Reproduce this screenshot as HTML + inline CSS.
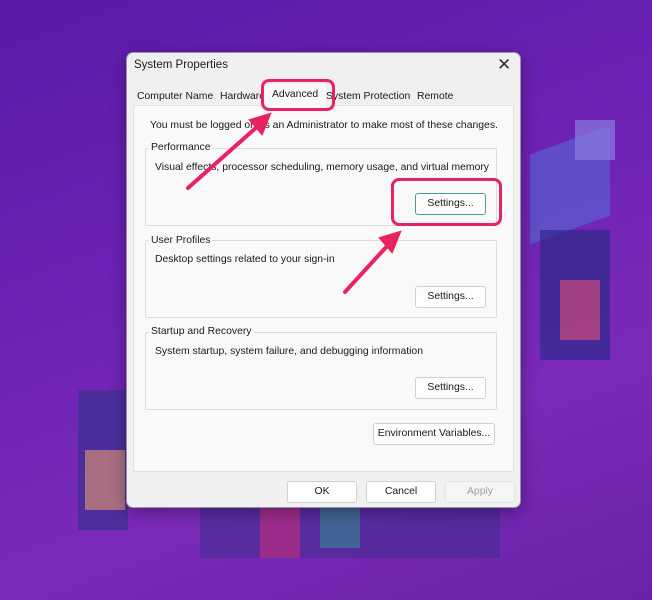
<!DOCTYPE html>
<html><head><style>
*{margin:0;padding:0;box-sizing:border-box}
body{width:652px;height:600px;overflow:hidden;position:relative;font-family:"Liberation Sans",sans-serif;font-size:10.4px;color:#1a1a1a;
background:linear-gradient(160deg,#5a1aa8 0%,#6d22b4 40%,#7a2ab8 70%,#6a22a8 100%)}
.a{position:absolute;white-space:nowrap}
.dlg{left:126px;top:52px;width:395px;height:456px;background:#f0f0f0;border:1px solid #9a8fb0;border-radius:7px;box-shadow:0 4px 16px rgba(0,0,0,.35)}
.panel{left:133px;top:105px;width:381px;height:367px;background:#f9f9f9;border:1px solid #e2e2e2}
.grp{border:1px solid #dcdcdc;border-radius:2px}
.lg{background:#f9f9f9;padding:0 2px}
.btn{background:#fdfdfd;border:1px solid #cfcfcf;border-radius:3px;text-align:center;line-height:20px;height:22px}
.tab{top:91px}
.hl{border:3.5px solid #e8235f;border-radius:8px}
</style></head><body>
<div class="a" style="left:530px;top:140px;width:80px;height:90px;background:#5a5fd0;transform:skewY(-20deg);opacity:.7"></div>
<div class="a" style="left:540px;top:230px;width:70px;height:130px;background:#2d2a8a;opacity:.7"></div>
<div class="a" style="left:560px;top:280px;width:40px;height:60px;background:#e2507a;opacity:.6"></div>
<div class="a" style="left:575px;top:120px;width:40px;height:40px;background:#8a7ae0;opacity:.7"></div>
<div class="a" style="left:78px;top:390px;width:50px;height:140px;background:#3a3090;opacity:.7"></div>
<div class="a" style="left:85px;top:450px;width:40px;height:60px;background:#d08a78;opacity:.7"></div>
<div class="a" style="left:200px;top:508px;width:300px;height:50px;background:#3a2d8a;opacity:.5"></div>
<div class="a" style="left:260px;top:508px;width:40px;height:50px;background:#e0307a;opacity:.5"></div>
<div class="a" style="left:320px;top:508px;width:40px;height:40px;background:#2a9a8a;opacity:.5"></div>

<div class="a dlg"></div>
<div class="a" style="left:134px;top:59px;font-size:11.5px">System Properties</div>
<div class="a" style="left:497px;top:55px;font-size:17px;color:#333">✕</div>
<div class="a panel"></div>
<div class="a tab" style="left:137px">Computer Name</div>
<div class="a tab" style="left:220px">Hardware</div>
<div class="a" style="left:264px;top:84px;width:62px;height:22px;background:#f9f9f9"></div>
<div class="a tab" style="left:272px;top:89px">Advanced</div>
<div class="a tab" style="left:326px">System Protection</div>
<div class="a tab" style="left:417px">Remote</div>

<div class="a" style="left:150px;top:120px">You must be logged on as an Administrator to make most of these changes.</div>

<div class="a grp" style="left:145px;top:148px;width:352px;height:78px"></div>
<div class="a lg" style="left:149px;top:142px">Performance</div>
<div class="a" style="left:155px;top:162px">Visual effects, processor scheduling, memory usage, and virtual memory</div>
<div class="a btn" style="left:415px;top:193px;width:71px;border-color:#4a9a9a">Settings...</div>

<div class="a grp" style="left:145px;top:240px;width:352px;height:78px"></div>
<div class="a lg" style="left:149px;top:235px">User Profiles</div>
<div class="a" style="left:155px;top:254px">Desktop settings related to your sign-in</div>
<div class="a btn" style="left:415px;top:286px;width:71px">Settings...</div>

<div class="a grp" style="left:145px;top:332px;width:352px;height:78px"></div>
<div class="a lg" style="left:149px;top:326px">Startup and Recovery</div>
<div class="a" style="left:155px;top:346px">System startup, system failure, and debugging information</div>
<div class="a btn" style="left:415px;top:377px;width:71px">Settings...</div>

<div class="a btn" style="left:373px;top:423px;width:122px">Environment Variables...</div>

<div class="a btn" style="left:287px;top:481px;width:70px">OK</div>
<div class="a btn" style="left:366px;top:481px;width:70px">Cancel</div>
<div class="a btn" style="left:445px;top:481px;width:70px;color:#a0a0a0;background:#f5f5f5;border-color:#e5e5e5">Apply</div>

<div class="a hl" style="left:261px;top:79px;width:74px;height:32px"></div>
<div class="a hl" style="left:391px;top:178px;width:111px;height:48px"></div>
<svg class="a" style="left:0;top:0" width="652" height="600">
<g stroke="#e8235f" stroke-width="4" stroke-linecap="round" fill="#e8235f">
<line x1="188" y1="188" x2="258" y2="126"/>
<polygon points="270,114 250,120 262,134" stroke-width="2"/>
<line x1="345" y1="292" x2="388" y2="245"/>
<polygon points="400,232 380,238 392,252" stroke-width="2"/>
</g></svg>
</body></html>
